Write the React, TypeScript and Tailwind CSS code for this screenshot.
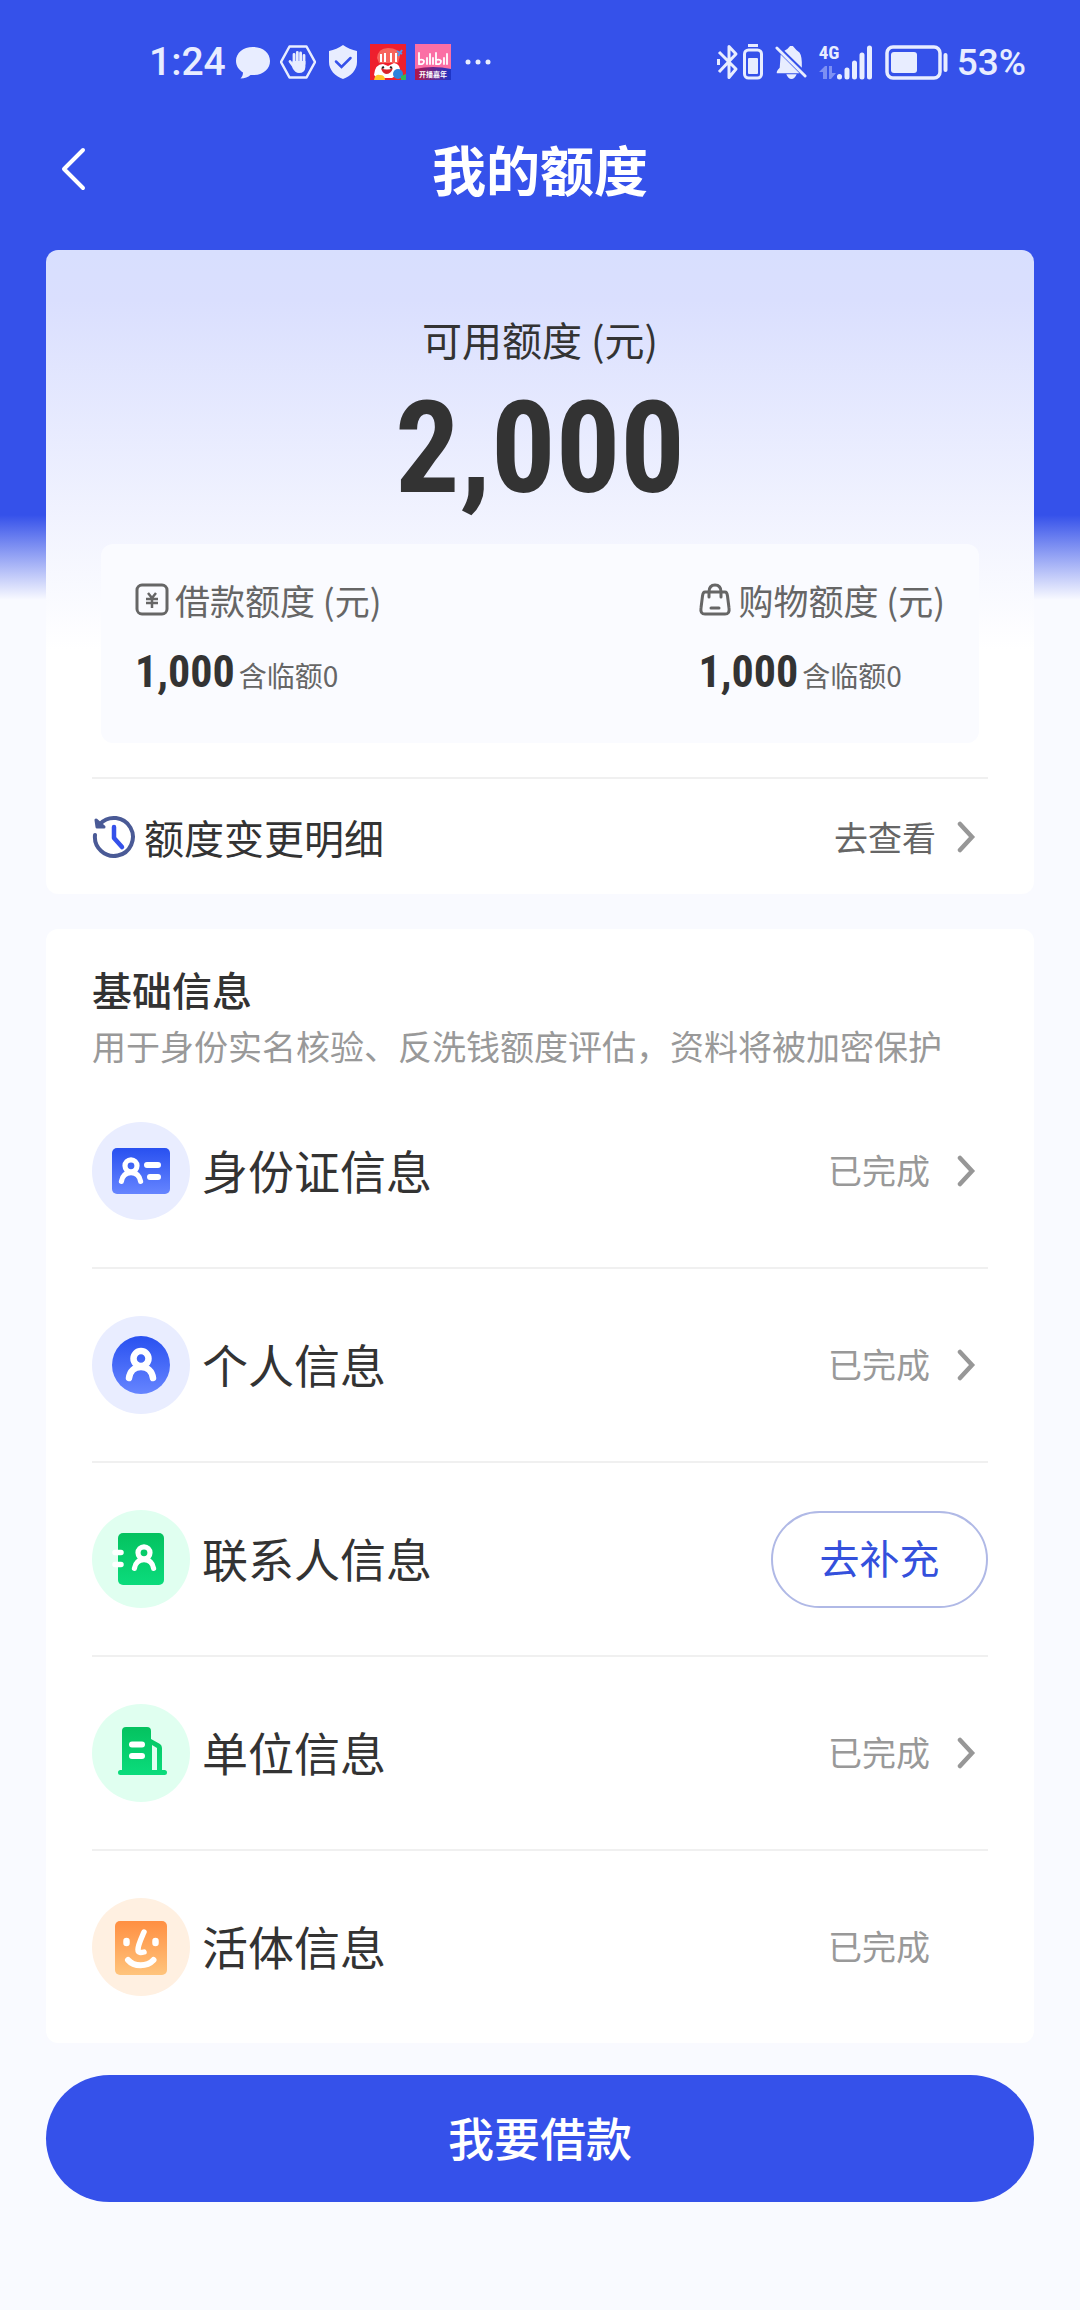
import type { ReactNode } from 'react'

type InfoItem = {
  label: string
  icon: ReactNode
  circle: string
  status: 'done' | 'todo'
  arrow?: boolean
}

function PersonMark({ x, y, scale }: { x: number; y: number; scale: number }) {
  return (
    <g
      transform={`translate(${x} ${y}) scale(${scale})`}
      fill="none"
      stroke="#fff"
      strokeWidth="6.500"
      strokeLinecap="round"
    >
      <circle cx="0" cy="-6.500" r="7.500" />
      <path d="M-12 13C-11 6 -6.500 2 0 2S11 6 12 13" />
    </g>
  )
}

function IdCardIcon() {
  return (
    <svg viewBox="0 0 98 98" className="size-full" aria-hidden="true">
      <defs>
        <linearGradient id="blue" x1="0" y1="0" x2="0" y2="1">
          <stop offset="0" stopColor="#2850f0" />
          <stop offset="1" stopColor="#6685ff" />
        </linearGradient>
      </defs>
      <rect x="20" y="26" width="58" height="46" rx="5" fill="url(#blue)" />
      <PersonMark x={39} y={49} scale={0.8} />
      <path d="M55 43H66M58 55H66" fill="none" stroke="#fff" strokeWidth="6" strokeLinecap="round" />
    </svg>
  )
}

function PersonIcon() {
  return (
    <svg viewBox="0 0 98 98" className="size-full" aria-hidden="true">
      <circle cx="49" cy="49" r="29" fill="url(#blue)" />
      <PersonMark x={49} y={49} scale={1} />
    </svg>
  )
}

function ContactsIcon() {
  return (
    <svg viewBox="0 0 98 98" className="size-full" aria-hidden="true">
      <defs>
        <linearGradient id="green" x1="0" y1="0" x2="0" y2="1">
          <stop offset="0" stopColor="#04c25f" />
          <stop offset="1" stopColor="#0bdc7c" />
        </linearGradient>
      </defs>
      <rect x="26" y="23" width="46" height="52" rx="5" fill="url(#green)" />
      <path d="M23 42.500H29M23 54.500H29" stroke="#fff" strokeWidth="5.500" strokeLinecap="round" />
      <PersonMark x={52} y={48} scale={0.8} />
    </svg>
  )
}

function BuildingIcon() {
  return (
    <svg viewBox="0 0 98 98" className="size-full" aria-hidden="true">
      <path
        d="M30 27Q30 23 34 23H55Q59 23 59 27V35L68 40Q70 41.500 70 44V66H72.500A2.500 2.500 0 0 1 72.500 71H28.500A2.500 2.500 0 0 1 28.500 66H30Z"
        fill="url(#green)"
      />
      <path d="M60 41L65 44V66H60Z" fill="#e0fff0" />
      <path d="M40 40.500H50M40 52H50" stroke="#fff" strokeWidth="6" strokeLinecap="round" />
    </svg>
  )
}

function FaceIcon() {
  return (
    <svg viewBox="0 0 98 98" className="size-full" aria-hidden="true">
      <defs>
        <linearGradient id="orange" x1="0" y1="0" x2="0" y2="1">
          <stop offset="0" stopColor="#ff8f42" />
          <stop offset="1" stopColor="#ffc47c" />
        </linearGradient>
      </defs>
      <rect x="23" y="23" width="52" height="54" rx="5" fill="url(#orange)" />
      <g fill="none" stroke="#fff" strokeWidth="5.500" strokeLinecap="round" strokeLinejoin="round">
        <path d="M34.500 43V45M63.500 43V45" strokeWidth="6.500" />
        <path d="M52 34C49 41 46 47 46 51.500C46 55 49 55 52 54" />
        <path d="M36 62C42 69 55 69 61.500 62" strokeWidth="6" />
      </g>
    </svg>
  )
}

function Chevron() {
  return (
    <svg viewBox="0 0 20 32" className="h-8 w-5" fill="none" stroke="#979797" strokeWidth="4.500" strokeLinecap="round" aria-hidden="true">
      <path d="M4 3L16 16L4 29" />
    </svg>
  )
}

const items: InfoItem[] = [
  { label: '身份证信息', icon: <IdCardIcon />, circle: 'bg-[#e9edff]', status: 'done', arrow: true },
  { label: '个人信息', icon: <PersonIcon />, circle: 'bg-[#e9edff]', status: 'done', arrow: true },
  { label: '联系人信息', icon: <ContactsIcon />, circle: 'bg-[#e0fff0]', status: 'todo' },
  { label: '单位信息', icon: <BuildingIcon />, circle: 'bg-[#e0fff0]', status: 'done', arrow: true },
  { label: '活体信息', icon: <FaceIcon />, circle: 'bg-[#fff0e1]', status: 'done' },
]

function StatusBar() {
  return (
    <div className="flex h-[124px] items-center justify-between pr-[54px] pl-[149px] font-[Roboto,sans-serif] text-[#e8edff]">
      <div className="flex items-center gap-[9px]">
        <span className="text-[39px] leading-none font-medium">1:24</span>
        <svg viewBox="0 0 36 36" className="size-9" fill="currentColor" aria-hidden="true">
          <path d="M18 3C8 3 1 9 1 17C1 22 4 26 8 28.500C8 31 7 33 5.500 34.500C10 34.500 13 33 15.500 31C28 32 35 25 35 17C35 9 28 3 18 3Z" />
        </svg>
        <svg viewBox="0 0 36 36" className="size-9" aria-hidden="true">
          <path d="M9.500 2.500H26.500L35 18L26.500 33.500H9.500L1 18Z" fill="none" stroke="currentColor" strokeWidth="2.500" strokeLinejoin="round" />
          <g fill="none" stroke="currentColor" strokeWidth="2.800" strokeLinecap="round">
            <path d="M14 20V10.500M17.300 18V8.500M20.600 18V9M24 20V11.500M10 17.500L14 23" />
          </g>
          <path d="M12.500 17H25.400V23Q25 29 19 29Q15 29 12.500 24Z" fill="currentColor" />
        </svg>
        <svg viewBox="0 0 36 36" className="size-9" aria-hidden="true">
          <path d="M18 1C22 4 27 6 32 7V18C32 26 26 32 18 35C10 32 4 26 4 18V7C9 6 14 4 18 1Z" fill="currentColor" />
          <path d="M11 17.500L16.500 23L25.500 14" fill="none" stroke="#3551ea" strokeWidth="2.500" strokeLinecap="round" />
        </svg>
        <svg viewBox="0 0 36 36" className="size-9" aria-hidden="true">
          <rect width="36" height="36" fill="#ee1f2d" />
          <path d="M7 14Q8 4 18 4Q29 4 30 12L28 19H9Z" fill="#f7645c" />
          <path d="M11 10V18M15 9V18M21 9V18M26 9V18" stroke="#fff" strokeWidth="2" />
          <path d="M4 31Q5 20 13 20L18 22L24 19Q31 20 30 29L22 34H7Z" fill="#fff" />
          <path d="M11 24Q17 27 23 24Q21 30 16 30Q12 29 11 24Z" fill="#d9232a" />
          <path d="M12 24L14 23M20 23L22 24" stroke="#222" strokeWidth="2" />
          <circle cx="28" cy="30" r="5" fill="#2d83dd" />
          <path d="M4 36Q5 30 10 31Q15 31 15 36Z" fill="#ffc629" />
          <path d="M31 36V32L36 30V36Z" fill="#30b95a" />
          <path d="M27 7L32 10M32 6L28 12" stroke="#5795e8" strokeWidth="2" />
        </svg>
        <svg viewBox="0 0 36 36" className="size-9" aria-hidden="true">
          <defs>
            <linearGradient id="promo" x1="0" x2="1">
              <stop offset="0" stopColor="#b31548" />
              <stop offset="1" stopColor="#1c35c9" />
            </linearGradient>
          </defs>
          <rect width="36" height="36" fill="#fb6fa5" />
          <path d="M0 25Q18 21 36 25V36H0Z" fill="url(#promo)" />
          <g fill="none" stroke="#fff" strokeWidth="1.800" strokeLinecap="round">
            <path d="M4 9V20Q9 21 9 17Q8 15 4 16M12 14V20M15 10V20M18 14V20M21 9V20Q26 21 26 17Q25 15 21 16M29 14V20M32 10V20" />
          </g>
          <text x="18" y="33" fill="#fff" fontSize="7" fontWeight="700" textAnchor="middle" fontFamily="Noto Sans CJK SC, sans-serif">
            开播嘉年
          </text>
        </svg>
        <svg viewBox="0 0 36 36" className="size-9" fill="currentColor" aria-hidden="true">
          <circle cx="8" cy="18" r="2.500" />
          <circle cx="18" cy="18" r="2.500" />
          <circle cx="28" cy="18" r="2.500" />
        </svg>
      </div>

      <div className="flex items-center gap-3">
        <div className="flex items-center gap-1">
          <svg viewBox="0 0 22 36" className="h-9 w-[22px]" fill="none" stroke="currentColor" strokeWidth="3" strokeLinejoin="round" aria-hidden="true">
            <path d="M2 8L19 25L12 33.500V2.500L19 10L2 28M1.500 15V21" />
          </svg>
          <svg viewBox="0 0 20 36" className="h-9 w-5" aria-hidden="true">
            <rect x="1.500" y="6" width="17" height="28" rx="4" fill="none" stroke="currentColor" strokeWidth="3" />
            <rect x="5" y="14" width="10" height="16" rx="1" fill="currentColor" />
            <path d="M5 1.500H15" stroke="currentColor" strokeWidth="3" />
          </svg>
        </div>
        <svg viewBox="0 0 34 36" className="h-9 w-8" aria-hidden="true">
          <path d="M6 10L26 30H2Q1 28 5 24Q5.500 18 6 10ZM10 6Q14 4 16 1H19Q22 5 26 8Q29 12 28.500 24Z" fill="currentColor" />
          <path d="M12 31H23Q21 36 17.500 36T12 31Z" fill="currentColor" />
          <path d="M2 3L32 33" stroke="currentColor" strokeWidth="3" strokeLinecap="round" />
        </svg>
        <div className="flex items-end">
          <div className="flex h-9 w-[18px] flex-col justify-between">
            <span className="font-[Roboto_Condensed,Roboto,sans-serif] text-[19px] leading-[18px] font-bold">4G</span>
            <svg viewBox="0 0 18 14" className="h-[14px] w-[18px]" fill="#7d90f3" aria-hidden="true">
              <path d="M0 6L6 0H8V13H4V6ZM10 0H13V7H17L12 13H10Z" />
            </svg>
          </div>
          <svg viewBox="0 0 36 36" className="size-9" stroke="currentColor" strokeWidth="5" strokeLinecap="round" aria-hidden="true">
            <path d="M2.500 32.500V33M10 26V33M17.500 19V33M25 11V33M32.500 4V33" />
          </svg>
        </div>
        <div className="flex items-center gap-2">
          <svg viewBox="0 0 64 36" className="h-9 w-16" aria-hidden="true">
            <rect x="2" y="3" width="53" height="31" rx="6" fill="none" stroke="currentColor" strokeWidth="3.500" />
            <rect x="6" y="8" width="26" height="21" rx="3" fill="currentColor" />
            <path d="M60.500 11V26" stroke="currentColor" strokeWidth="4" strokeLinecap="round" />
          </svg>
          <span className="text-[37px] leading-none font-medium">53%</span>
        </div>
      </div>
    </div>
  )
}

function Quota({ icon, label }: { icon: ReactNode; label: string }) {
  return (
    <div>
      <div className="flex items-center gap-[6px] text-[35px] leading-[48px] text-[#666]">
        {icon}
        <span>{label}</span>
      </div>
      <div className="mt-5 flex items-baseline gap-1 leading-[56px]">
        <span className="font-[Roboto_Condensed,Roboto,sans-serif] text-[44px] font-bold">1,000</span>
        <span className="text-[28px] text-[#666]">含临额0</span>
      </div>
    </div>
  )
}

export default function App() {
  return (
    <main className="min-h-screen bg-[#f9faff] bg-[linear-gradient(#3551ea_515px,#f9faff_600px)] pb-[108px] font-['Noto_Sans_CJK_SC',sans-serif] text-[#333]">
      <StatusBar />

      <header className="grid h-[126px] grid-cols-[1fr_auto_1fr] items-start px-[58px] text-white">
        <button type="button" aria-label="返回" className="mt-[22px] size-12">
          <svg viewBox="0 0 48 48" className="size-12" fill="none" stroke="currentColor" strokeWidth="4" strokeLinecap="round" strokeLinejoin="round" aria-hidden="true">
            <path d="M25 4L6 23L25 42" />
          </svg>
        </button>
        <h1 className="text-[54px] leading-[90px] font-bold">我的额度</h1>
      </header>

      <div className="px-[46px]">
        {/* 可用额度 */}
        <section className="rounded-xl bg-white bg-[linear-gradient(#d8dffe,#dadffe_50px,#ffffff_400px)] px-[46px] pt-[61px]">
          <div className="text-center">
            <h2 className="text-[40px] leading-[56px]">可用额度 (元)</h2>
            <p className="mt-[6px] font-[Roboto_Condensed,Roboto,sans-serif] text-[128px] leading-[150px] font-bold">2,000</p>
          </div>

          <div className="mx-[9px] mt-[21px] flex justify-between rounded-xl bg-[#fafbff] px-[34px] pt-8 pb-10">
            <Quota
              label="借款额度 (元)"
              icon={
                <svg viewBox="0 0 34 34" className="size-[34px]" fill="none" stroke="#666" strokeWidth="3" aria-hidden="true">
                  <rect x="2" y="2" width="30" height="29" rx="5" />
                  <path d="M13 10L17 15L21 10M11 16H23M11 20H23M17 15V25" strokeWidth="2.500" />
                </svg>
              }
            />
            <Quota
              label="购物额度 (元)"
              icon={
                <svg viewBox="0 0 34 34" className="size-[34px]" fill="none" stroke="#666" strokeWidth="3" strokeLinecap="round" aria-hidden="true">
                  <path d="M7 9H27Q29 9 29.500 13L31 25Q32 31 27 31H7Q2 31 3 25L4.500 13Q5 9 7 9Z" />
                  <path d="M11 14V9Q11 2 17 2T23 9V14M13 25H21" />
                </svg>
              }
            />
          </div>

          <a href="#history" className="mt-[34px] flex h-[117px] items-center border-t-2 border-[#f0f0f0]">
            <svg viewBox="0 0 44 44" className="size-11" fill="none" strokeLinecap="round" strokeLinejoin="round" aria-hidden="true">
              <path d="M8 9A19 19 0 1 1 3 20" stroke="#4a5a96" strokeWidth="4" />
              <path d="M4 5L5 12L12 12Z" fill="#4a5a96" stroke="#4a5a96" strokeWidth="3" />
              <path d="M22 12V23L30 32" stroke="#3551ea" strokeWidth="4.500" />
            </svg>
            <span className="ml-2 text-[40px]">额度变更明细</span>
            <span className="mr-5 ml-auto text-[34px] text-[#666]">去查看</span>
            <span className="mr-3">
              <Chevron />
            </span>
          </a>
        </section>

        {/* 基础信息 */}
        <section className="mt-[35px] rounded-xl bg-white px-[46px] pt-8">
          <h2 className="text-[40px] leading-[56px] font-medium">基础信息</h2>
          <p className="text-[34px] leading-[58px] text-[#999]">用于身份实名核验、反洗钱额度评估，资料将被加密保护</p>
          <ul>
            {items.map((item) => (
              <li key={item.label} className="flex h-[194px] items-center border-b-2 border-[#f0f0f0] last:h-[192px] last:border-b-0">
                <span className={`size-[98px] overflow-hidden rounded-full ${item.circle}`}>{item.icon}</span>
                <span className="ml-3 pb-1 text-[46px]">{item.label}</span>
                {item.status === 'todo' ? (
                  <button type="button" className="ml-auto h-[97px] w-[217px] rounded-full border-2 border-[#b0b9e6] pb-1 text-[40px] text-[#3450dc]">
                    去补充
                  </button>
                ) : (
                  <a href="#info" className="mr-3 ml-auto flex items-center gap-[26px] text-[34px] text-[#999]">
                    <span className="pb-1">已完成</span>
                    {item.arrow ? <Chevron /> : <span className="w-5" />}
                  </a>
                )}
              </li>
            ))}
          </ul>
        </section>

        <button type="button" className="mt-8 h-[127px] w-full rounded-full bg-[#3551ea] pb-1 text-[46px] font-medium text-white">
          我要借款
        </button>
      </div>
    </main>
  )
}
